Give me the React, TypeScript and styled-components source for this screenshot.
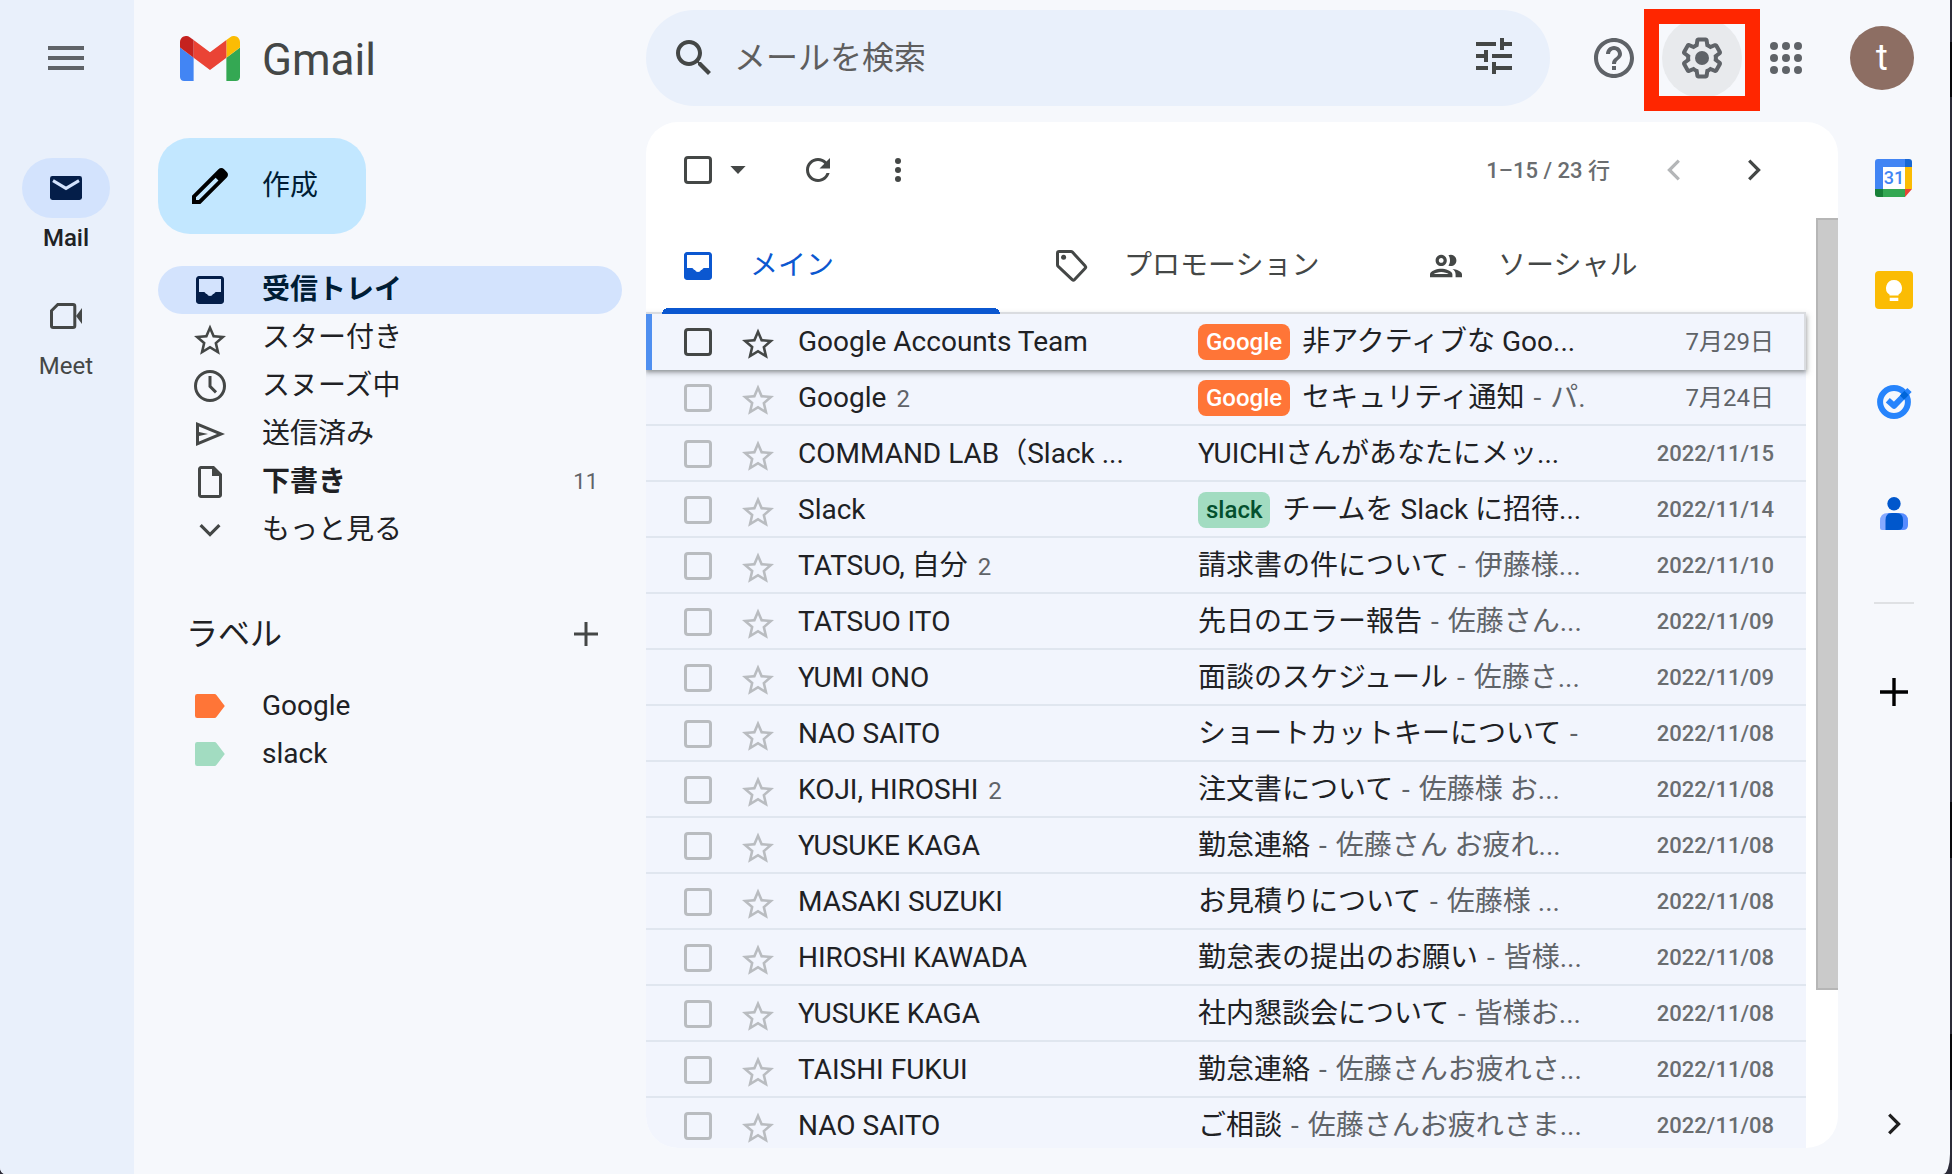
import React from "react";
import styled, { createGlobalStyle } from "styled-components";

const INK = "#202124";
const ICON = "#444746";
const MUTED = "#5f6368";
const BLUE = "#0b57d0";

const GlobalStyle = createGlobalStyle`
  *, *::before, *::after { box-sizing: border-box; }
  html, body { margin: 0; background: #2b2b38; }
  body, button, input, table {
    font-family: Roboto, "Noto Sans CJK JP", sans-serif;
    font-size: 28px;
    color: ${INK};
  }
  button { border: 0; padding: 0; background: none; cursor: pointer; text-align: left; }
  a { color: inherit; text-decoration: none; }
  svg { display: block; flex: none; }
`;

/* ---------- frame ---------- */

const Desktop = styled.div`
  height: 100vh;
  padding-right: 2px;
  background: linear-gradient(
    #2b2b38 42px, #08080c 42px 97px, #2b2b38 97px 802px, #08080c 802px 858px,
    #2b2b38 858px 1034px, #08080c 1034px 1090px, #2b2b38 1090px
  );
`;

const Window = styled.div`
  display: flex;
  height: 100%;
  overflow: hidden;
  background: #f6f8fc;
  border-radius: 0 0 7px 5px / 0 0 20px 7px;
`;

const Rail = styled.nav`
  display: flex;
  flex-direction: column;
  align-items: center;
  flex: none;
  width: 134px;
  padding: 34px 2px 0 0;
  background: #e9f0fb;
`;

const RailItem = styled.a<{ $active?: boolean }>`
  display: flex;
  flex-direction: column;
  align-items: center;
  gap: 6px;
  font-size: 24px;
  line-height: 28px;
  font-weight: ${(p) => (p.$active ? 500 : 400)};
  color: ${(p) => (p.$active ? INK : ICON)};
`;

const RailPill = styled.span<{ $active?: boolean }>`
  display: flex;
  align-items: center;
  justify-content: center;
  width: 88px;
  height: 60px;
  border-radius: 30px;
  background: ${(p) => (p.$active ? "#d3e3fd" : "transparent")};
  color: ${(p) => (p.$active ? "#041e49" : ICON)};
`;

const RailList = styled.div`
  display: flex;
  flex-direction: column;
  gap: 34px;
  margin-top: 76px;
`;

const Page = styled.div`
  display: flex;
  flex-direction: column;
  flex: 1;
  min-width: 0;
`;

const Header = styled.header`
  display: flex;
  align-items: center;
  flex: none;
  height: 122px;
  padding-bottom: 6px;
`;

const Brand = styled.a`
  display: flex;
  align-items: center;
  gap: 22px;
  flex: none;
  width: 512px;
  padding-left: 46px;
`;

const BrandName = styled.span`
  padding-top: 4px;
  font-size: 44px;
  line-height: 52px;
  color: ${ICON};
`;

const Search = styled.form`
  display: flex;
  align-items: center;
  flex: 1;
  min-width: 0;
  height: 96px;
  padding: 0 32px 0 24px;
  border-radius: 48px;
  background: #e9f0fb;
  color: ${ICON};
`;

const SearchInput = styled.input`
  flex: 1;
  min-width: 0;
  height: 48px;
  margin: 0 16px;
  padding: 0;
  border: 0;
  outline: 0;
  background: none;
  font-size: 32px;
  &::placeholder { color: #5e5e5e; opacity: 1; }
`;

const Actions = styled.div`
  display: flex;
  align-items: center;
  flex: none;
  padding: 0 36px 0 24px;
  color: ${MUTED};
`;

const RoundButton = styled.button<{ $shaded?: boolean }>`
  display: flex;
  align-items: center;
  justify-content: center;
  width: 80px;
  height: 80px;
  border-radius: 50%;
  color: inherit;
  background: ${(p) => (p.$shaded ? "#e8eaed" : "none")};
`;

const Highlighted = styled.div`
  position: relative;
  margin: 0 4px 0 8px;
`;

const HighlightFrame = styled.span`
  position: absolute;
  inset: -9px -18px -13px -18px;
  border: 15px solid #ff2600;
  pointer-events: none;
`;

const Avatar = styled.button`
  width: 64px;
  height: 64px;
  margin-left: 24px;
  border-radius: 50%;
  background: #8d6e63;
  color: #fff;
  font-size: 36px;
  line-height: 64px;
  text-align: center;
`;

const Body = styled.div`
  display: flex;
  flex: 1;
  min-height: 0;
  padding-bottom: 26px;
`;

/* ---------- sidebar ---------- */

const Sidebar = styled.aside`
  flex: none;
  width: 512px;
  padding: 16px 24px 0;
`;

const Compose = styled.button`
  display: flex;
  align-items: center;
  gap: 28px;
  height: 96px;
  margin-bottom: 32px;
  padding: 0 48px 0 28px;
  border-radius: 32px;
  background: #c2e7ff;
  color: #001d35;
`;

const RaisedLabel = styled.span`
  padding-bottom: 6px;
`;

const NavLink = styled.a<{ $active?: boolean; $bold?: boolean }>`
  display: flex;
  align-items: center;
  gap: 32px;
  height: 48px;
  padding: 0 24px 0 32px;
  border-radius: 24px;
  line-height: 40px;
  color: ${(p) => (p.$active ? "#001d35" : INK)};
  background: ${(p) => (p.$active ? "#d3e3fd" : "none")};
  font-weight: ${(p) => (p.$active || p.$bold ? 700 : 400)};
  svg { color: ${(p) => (p.$active ? "#041e49" : ICON)}; }
`;

const NavCount = styled.span`
  margin-left: auto;
  font-size: 22px;
  font-weight: 400;
  color: ${MUTED};
`;

const LabelHeader = styled.div`
  display: flex;
  align-items: center;
  justify-content: space-between;
  height: 80px;
  margin: 40px 0 8px;
  padding: 0 16px 0 28px;
`;

const LabelTitle = styled.h2`
  margin: 0;
  font-size: 32px;
  line-height: 40px;
  font-weight: 400;
`;

const IconButton = styled.button`
  display: flex;
  align-items: center;
  justify-content: center;
  flex: none;
  width: 40px;
  height: 40px;
  color: ${ICON};
  &:disabled { color: #b4b6b8; }
`;

const MenuButton = styled(IconButton)`
  width: 48px;
  height: 48px;
  color: ${MUTED};
`;

/* ---------- mail panel ---------- */

const Panel = styled.main`
  display: flex;
  flex-direction: column;
  flex: 1;
  min-width: 0;
  overflow: hidden;
  border-radius: 32px;
  background: #fff;
`;

const Toolbar = styled.div`
  display: flex;
  align-items: center;
  flex: none;
  height: 96px;
  padding: 0 64px 0 38px;
`;

const SelectMenuButton = styled(IconButton)`
  margin-left: 6px;
`;

const ToolGroup = styled.div`
  display: flex;
  align-items: center;
  gap: 40px;
  margin-left: 40px;
`;

const Pager = styled.div`
  display: flex;
  align-items: center;
  gap: 40px;
  margin-left: auto;
`;

const PagerText = styled.span`
  margin-right: 4px;
  padding-bottom: 4px;
  font-size: 22px;
  font-weight: 500;
  color: #6a6d70;
`;

const Checkbox = styled.input<{ $strong?: boolean }>`
  appearance: none;
  display: block;
  flex: none;
  width: 28px;
  height: 28px;
  margin: 0;
  border: 3px solid ${(p) => (p.$strong ? ICON : "#b9bcc0")};
  border-radius: 4px;
`;

const ScrollArea = styled.div`
  display: flex;
  flex: 1;
  min-height: 0;
`;

const ScrollBody = styled.div`
  flex: 1;
  min-width: 0;
  margin-right: 10px;
`;

const ScrollThumb = styled.div`
  flex: none;
  width: 22px;
  height: 83%;
  border: 2px solid #b6b6b6;
  border-right: 0;
  background: #cacaca;
`;

const Tabs = styled.div`
  position: relative;
  z-index: 1;
  display: flex;
  height: 96px;
`;

const Tab = styled.button<{ $active?: boolean }>`
  width: 374px;
  padding-left: 16px;
  color: ${(p) => (p.$active ? BLUE : ICON)};
`;

const TabInner = styled.span<{ $active?: boolean }>`
  display: flex;
  align-items: center;
  gap: 32px;
  width: 338px;
  height: 96px;
  padding-left: 16px;
  background: ${(p) =>
    p.$active
      ? `radial-gradient(circle at 6px 6px, ${BLUE} 6px, transparent 6px) left bottom / 6px 6px no-repeat,
         radial-gradient(circle at 0 6px, ${BLUE} 6px, transparent 6px) right bottom / 6px 6px no-repeat,
         linear-gradient(${BLUE}, ${BLUE}) center bottom / calc(100% - 12px) 6px no-repeat`
      : "none"};
`;

const MailTable = styled.table`
  width: 100%;
  table-layout: fixed;
  border-spacing: 0;
`;

const Col = styled.col<{ $width?: number }>`
  width: ${(p) => (p.$width ? `${p.$width}px` : "auto")};
`;

const Row = styled.tr<{ $hover?: boolean }>`
  height: 56px;
  background: #f2f5fd;
  ${(p) =>
    p.$hover
      ? `position: relative;
         box-shadow: inset -2px 0 0 #dadce0, 0 -2px 0 #dadce0,
           0 2px 4px rgba(60, 64, 67, 0.45), 0 2px 6px 2px rgba(60, 64, 67, 0.15);
         td:first-child { box-shadow: inset 6px 0 0 #4f8ff0; }`
      : `td { box-shadow: inset 0 -2px 0 #e0e6ef; }`}
`;

const Cell = styled.td`
  height: 56px;
  padding: 0;
  overflow: hidden;
  white-space: nowrap;
  vertical-align: middle;
  line-height: 40px;
`;

const CheckCell = styled(Cell)`
  padding-left: 38px;
`;

const SenderCell = styled(Cell)`
  padding-left: 16px;
`;

const DateCell = styled(Cell)<{ $full: boolean }>`
  padding-right: 32px;
  text-align: right;
  font-size: ${(p) => (p.$full ? 22 : 24)}px;
  font-weight: ${(p) => (p.$full ? 500 : 400)};
  color: ${(p) => (p.$full ? "#6a6d70" : MUTED)};
`;

const StarButton = styled(IconButton)<{ $strong?: boolean }>`
  margin-left: 4px;
  color: ${(p) => (p.$strong ? ICON : "#b9bcc0")};
`;

const Count = styled.span`
  margin-left: 10px;
  font-size: 24px;
  color: ${MUTED};
`;

const SubjectLine = styled.div`
  display: flex;
  align-items: center;
  overflow: hidden;
`;

const Snippet = styled.span`
  color: ${MUTED};
  white-space: pre;
`;

const Dash = styled.span`
  margin: 0 2px;
`;

const Chip = styled.span<{ $bg: string; $fg: string }>`
  flex: none;
  height: 36px;
  margin-right: 12px;
  padding: 0 8px;
  border-radius: 8px;
  font-size: 24px;
  font-weight: 500;
  line-height: 36px;
  background: ${(p) => p.$bg};
  color: ${(p) => p.$fg};
`;

/* ---------- side panel ---------- */

const SidePanel = styled.aside`
  display: flex;
  flex-direction: column;
  align-items: center;
  flex: none;
  width: 112px;
`;

const AppButton = styled.button`
  display: flex;
  align-items: center;
  justify-content: center;
  width: 112px;
  height: 112px;
  color: #000;
`;

const Divider = styled.hr`
  width: 40px;
  height: 2px;
  margin: 32px 0;
  border: 0;
  background: #dfe1e4;
`;

const Collapse = styled(IconButton)`
  height: 48px;
  margin-top: auto;
  color: #1f1f1f;
`;

/* ---------- icons ---------- */

type IconProps = { size?: number; box?: string; children: React.ReactNode };

const Icon = ({ size = 40, box = "0 0 20 20", children }: IconProps) => (
  <svg width={size} height={size} viewBox={box} fill="currentColor" aria-hidden="true">
    {children}
  </svg>
);

const InboxIcon = () => (
  <Icon>
    <path
      fillRule="evenodd"
      d="M4.5 17q-.62 0-1.06-.44Q3 16.13 3 15.5v-11q0-.62.44-1.06Q3.88 3 4.5 3h11q.62 0 1.06.44.44.44.44 1.06v11q0 .62-.44 1.06-.44.44-1.06.44zM4.5 4.5V11H7q.4 0 .6.4.3.6.9.6.3 1 1.5 1t1.5-1q.6 0 .9-.6.2-.4.6-.4h2.5V4.5z"
    />
  </Icon>
);

const StarIcon = () => (
  <Icon box="-0.5 -2 25 25">
    <path d="M22 9.24l-7.19-.62L12 2 9.19 8.63 2 9.24l5.46 4.73L5.82 21 12 17.27 18.18 21l-1.63-7.03L22 9.24zM12 15.4l-3.76 2.27 1-4.28-3.32-2.88 4.38-.38L12 6.1l1.71 4.04 4.38.38-3.32 2.88 1 4.28L12 15.4z" />
  </Icon>
);

const ClockIcon = () => (
  <Icon>
    <g fill="none" stroke="currentColor" strokeWidth="1.5">
      <circle cx="10" cy="10" r="7.25" />
      <path d="M10 5v5.2l3 3" />
    </g>
  </Icon>
);

const SendIcon = () => (
  <Icon>
    <path fillRule="evenodd" d="M3 16V4l14.5 6zM4.5 13.75 13.5 10 4.5 6.25V9L9 10l-4.5 1z" />
  </Icon>
);

const DraftIcon = () => (
  <Icon>
    <path
      fillRule="evenodd"
      d="M5.5 18q-.62 0-1.06-.44Q4 17.13 4 16.5v-13q0-.62.44-1.06Q4.88 2 5.5 2H12l4 4v10.5q0 .62-.44 1.06-.44.44-1.06.44zM11 7V3.5H5.5v13h9V7z"
    />
  </Icon>
);

const ChevronIcon = ({ turn = 0 }: { turn?: number }) => (
  <Icon>
    <path
      d="M5.3 7.6 10 12.3l4.7-4.7"
      fill="none"
      stroke="currentColor"
      strokeWidth="1.6"
      transform={`rotate(${turn} 10 10)`}
    />
  </Icon>
);

const PlusIcon = ({ reach = 6, weight = 1.5 }: { reach?: number; weight?: number }) => (
  <Icon>
    <path
      d={`M10 ${10 - reach}V${10 + reach}M${10 - reach} 10H${10 + reach}`}
      stroke="currentColor"
      strokeWidth={weight}
    />
  </Icon>
);

const LabelIcon = ({ color }: { color: string }) => (
  <Icon>
    <path fill={color} d="M3.6 4h8.6q.7 0 1.1.6L17.4 10l-4.1 5.4q-.4.6-1.1.6H3.6q-1.1 0-1.1-1.1V5.1Q2.5 4 3.6 4z" />
  </Icon>
);

const TagIcon = () => (
  <Icon>
    <path
      d="M3.6 2.75h5.9q.4 0 .7.3l6.4 7q.5.6 0 1.1l-5.4 5.7q-.5.5-1.1 0L3.1 10.2q-.35-.3-.35-.7V3.6q0-.85.85-.85z"
      fill="none"
      stroke="currentColor"
      strokeWidth="1.5"
    />
    <circle cx="5.8" cy="5.6" r="1.25" />
  </Icon>
);

const PeopleIcon = () => (
  <Icon box="-0.5 -0.5 25 25">
    <path d="M9 13.75c-2.34 0-7 1.17-7 3.5V19h14v-1.75c0-2.33-4.66-3.5-7-3.5zM4.34 17c.84-.58 2.87-1.25 4.66-1.25s3.82.67 4.66 1.25H4.34zM9 12c1.93 0 3.5-1.57 3.5-3.5S10.93 5 9 5 5.5 6.57 5.5 8.5 7.07 12 9 12zm0-5c.83 0 1.5.67 1.5 1.5S9.83 10 9 10s-1.5-.67-1.5-1.5S8.17 7 9 7zm7.04 6.81c1.16.84 1.96 1.96 1.96 3.44V19h4v-1.75c0-2.02-3.5-3.17-5.96-3.44zM15 12c1.93 0 3.5-1.57 3.5-3.5S16.93 5 15 5c-.54 0-1.04.13-1.5.35.63.89 1 1.98 1 3.15s-.37 2.26-1 3.15c.46.22.96.35 1.5.35z" />
  </Icon>
);

const MenuIcon = () => (
  <Icon size={48} box="0 0 24 24">
    <path d="M3 6h18v2H3zM3 11h18v2H3zM3 16h18v2H3z" />
  </Icon>
);

const MailIcon = () => (
  <Icon>
    <rect x="2" y="4" width="16" height="12" rx="1.2" />
    <path d="M3.5 6.3 10 10.2l6.5-3.9" fill="none" stroke="#d3e3fd" strokeWidth="1.5" />
  </Icon>
);

const MeetIcon = () => (
  <Icon>
    <path
      d="M2.75 7.4 5.9 4.25h7.6q.9 0 .9.9v9.7q0 .9-.9.9H3.6q-.85 0-.85-.9z"
      fill="none"
      stroke="currentColor"
      strokeWidth="1.5"
    />
    <path d="M15 10l3-4v8z" />
  </Icon>
);

const PencilIcon = () => (
  <Icon size={48} box="0 0 24 24">
    <path
      fill="#000"
      d="M20.41 4.94l-1.35-1.35c-.78-.78-2.05-.78-2.83 0L3 16.82V21h4.18L20.41 7.77c.79-.78.79-2.05 0-2.83zM6.41 19.06L5 19v-1.36l9.82-9.82 1.41 1.41-9.82 9.83z"
    />
  </Icon>
);

const SearchIcon = () => (
  <Icon size={48} box="0 0 24 24">
    <path d="M15.5 14h-.79l-.28-.27C15.41 12.59 16 11.11 16 9.5 16 5.91 13.09 3 9.5 3S3 5.91 3 9.5 5.91 16 9.5 16c1.61 0 3.09-.59 4.23-1.57l.27.28v.79l5 4.99L20.49 19l-4.99-5zm-6 0C7.01 14 5 11.99 5 9.5S7.01 5 9.5 5 14 7.01 14 9.5 11.99 14 9.5 14z" />
  </Icon>
);

const TuneIcon = () => (
  <Icon size={48} box="0 1 24 24">
    <path d="M3 17v2h6v-2H3zM3 5v2h10V5H3zm10 16v-2h8v-2h-8v-2h-2v6h2zM7 9v2H3v2h4v2h2V9H7zm14 4v-2H11v2h10zm-6-4h2V7h4V5h-4V3h-2v6z" />
  </Icon>
);

const HelpIcon = () => (
  <Icon size={48} box="0 0 24 24">
    <path d="M11 18h2v-2h-2v2zm1-16C6.48 2 2 6.48 2 12s4.48 10 10 10 10-4.48 10-10S17.52 2 12 2zm0 18c-4.41 0-8-3.59-8-8s3.59-8 8-8 8 3.59 8 8-3.59 8-8 8zm0-14c-2.21 0-4 1.79-4 4h2c0-1.1.9-2 2-2s2 .9 2 2c0 2-3 1.75-3 5h2c0-2.25 3-2.5 3-5 0-2.21-1.79-4-4-4z" />
  </Icon>
);

const GearIcon = () => (
  <Icon size={48} box="0 0 24 24">
    <path d="M13.85 22.25h-3.7c-.74 0-1.36-.54-1.45-1.27l-.27-1.89c-.27-.14-.53-.29-.79-.46l-1.8.72c-.7.26-1.47-.03-1.81-.65L2.2 15.53c-.35-.66-.2-1.44.36-1.88l1.53-1.19c-.01-.15-.02-.3-.02-.46 0-.15.01-.31.02-.46l-1.52-1.19c-.59-.45-.74-1.26-.37-1.88l1.85-3.19c.34-.62 1.11-.9 1.79-.63l1.81.73c.26-.17.52-.32.78-.46l.27-1.91c.09-.7.71-1.25 1.44-1.25h3.7c.74 0 1.36.54 1.45 1.27l.27 1.89c.27.14.53.29.79.46l1.8-.72c.71-.26 1.48.03 1.82.65l1.84 3.18c.36.66.2 1.44-.36 1.88l-1.52 1.19c.01.15.02.3.02.46s-.01.31-.02.46l1.52 1.19c.56.45.72 1.23.37 1.86l-1.86 3.22c-.34.62-1.11.9-1.8.63l-1.8-.72c-.26.17-.52.32-.78.46l-.27 1.91c-.1.68-.72 1.22-1.46 1.22zm-3.23-2h2.76l.37-2.55.53-.22c.44-.18.88-.44 1.34-.78l.45-.34 2.38.96 1.38-2.4-2.03-1.58.07-.56c.03-.26.06-.51.06-.78s-.03-.53-.06-.78l-.07-.56 2.03-1.58-1.39-2.4-2.39.96-.45-.35c-.42-.32-.87-.58-1.33-.77l-.52-.22-.37-2.55h-2.76l-.37 2.55-.53.21c-.44.19-.88.44-1.34.79l-.45.33-2.38-.95-1.39 2.39 2.03 1.58-.07.56a7 7 0 0 0-.06.79c0 .26.02.53.06.78l.07.56-2.03 1.58 1.38 2.4 2.39-.96.45.35c.43.33.86.58 1.33.77l.53.22.38 2.55z" />
    <circle cx="12" cy="12" r="3.5" />
  </Icon>
);

const AppsIcon = () => (
  <Icon size={48} box="0 0 24 24">
    {[6, 12, 18].map((y) => [6, 12, 18].map((x) => <circle key={`${x}-${y}`} cx={x} cy={y} r="2" />))}
  </Icon>
);

const RefreshIcon = () => (
  <Icon size={36} box="0 0 24 24">
    <path d="M17.65 6.35C16.2 4.9 14.21 4 12 4c-4.42 0-7.99 3.58-7.99 8s3.57 8 7.99 8c3.73 0 6.84-2.55 7.73-6h-2.08c-.82 2.33-3.04 4-5.65 4-3.31 0-6-2.69-6-6s2.69-6 6-6c1.66 0 3.14.69 4.22 1.78L13 11h7V4l-2.35 2.35z" />
  </Icon>
);

const MoreIcon = () => (
  <Icon size={36} box="0 0 24 24">
    <circle cx="12" cy="6" r="2" />
    <circle cx="12" cy="12" r="2" />
    <circle cx="12" cy="18" r="2" />
  </Icon>
);

const CaretIcon = () => (
  <Icon>
    <path d="M6.2 8h7.6L10 12z" />
  </Icon>
);

const GmailLogo = () => (
  <svg width="60" height="45" viewBox="52 42 88 66" aria-hidden="true">
    <path fill="#4285f4" d="M58 108h14V74L52 59v43c0 3.32 2.69 6 6 6" />
    <path fill="#34a853" d="M120 108h14c3.32 0 6-2.69 6-6V59l-20 15" />
    <path fill="#fbbc04" d="M120 48v26l20-15v-8c0-7.42-8.47-11.65-14.4-7.2" />
    <path fill="#ea4335" d="M72 74V48l24 18 24-18v26L96 92" />
    <path fill="#c5221f" d="M52 51v8l20 15V48l-5.6-4.2c-5.94-4.45-14.4-.22-14.4 7.2" />
  </svg>
);

const CalendarIcon = () => (
  <svg width="38" height="38" viewBox="0 0 38 38" aria-hidden="true">
    <path fill="#4285f4" d="M3 0h27v8H8v22H0V3q0-3 3-3z" />
    <path fill="#1967d2" d="M30 0h4q3 0 3 3v5h-7z" />
    <path fill="#fbbc04" d="M30 8h7v22h-7z" />
    <path fill="#34a853" d="M8 30h22v8H8z" />
    <path fill="#188038" d="M0 30h8v8H3q-3 0-3-3z" />
    <path fill="#ea4335" d="M30 30h7l-7 8z" />
    <path fill="#fff" d="M8 8h22v22H8z" />
    <text x="19" y="25" fontSize="18" fontWeight="500" fill="#4285f4" textAnchor="middle">
      31
    </text>
  </svg>
);

const KeepIcon = () => (
  <svg width="38" height="38" viewBox="0 0 38 38" aria-hidden="true">
    <rect width="38" height="38" rx="4" fill="#fbbc04" />
    <path fill="#fff" d="M19 9a8 8 0 0 1 4.5 14.6v.9h-9v-.9A8 8 0 0 1 19 9zM14.7 26.8h8.6V30h-8.6z" />
  </svg>
);

const TasksIcon = () => (
  <svg width="40" height="40" viewBox="0 0 40 40" aria-hidden="true">
    <circle cx="20" cy="20" r="13.9" fill="none" stroke="#2684fc" strokeWidth="6" />
    <path d="M13.8 18.2 20 23.8 35.5 8" fill="none" stroke="#2684fc" strokeWidth="6" strokeLinejoin="round" />
    <path d="M28 15.6 32.6 10.9" stroke="#0066da" strokeWidth="6" />
  </svg>
);

const ContactsIcon = () => (
  <svg width="40" height="40" viewBox="0 0 40 40" aria-hidden="true">
    <circle cx="20" cy="9.7" r="6.7" fill="#0057cc" />
    <path fill="#86a9ff" d="M14 19h12v17H8q-2 0-2-2v-7q0-8 8-8z" />
    <path fill="#578cff" d="M14 19h12q8 0 8 8v4q0 5-5 5H14z" />
    <path fill="#0057cc" d="M18 19h4q7 0 7 7v5q0 5-5 5H11.5v-10q0-7 6.5-7z" />
  </svg>
);

/* ---------- data ---------- */

type Mail = {
  sender: string;
  count?: number;
  chip?: "Google" | "slack";
  subject: string;
  snippet?: string;
  date: string;
};

const chipColors = {
  Google: { $bg: "#ff7537", $fg: "#ffffff" },
  slack: { $bg: "#a2dcc1", $fg: "#04502e" },
};

const mails: Mail[] = [
  { sender: "Google Accounts Team", chip: "Google", subject: "非アクティブな Goo...", date: "7月29日" },
  { sender: "Google", count: 2, chip: "Google", subject: "セキュリティ通知", snippet: "パ.", date: "7月24日" },
  { sender: "COMMAND LAB（Slack ...", subject: "YUICHIさんがあなたにメッ...", date: "2022/11/15" },
  { sender: "Slack", chip: "slack", subject: "チームを Slack に招待...", date: "2022/11/14" },
  { sender: "TATSUO, 自分", count: 2, subject: "請求書の件について", snippet: "伊藤様...", date: "2022/11/10" },
  { sender: "TATSUO ITO", subject: "先日のエラー報告", snippet: "佐藤さん...", date: "2022/11/09" },
  { sender: "YUMI ONO", subject: "面談のスケジュール", snippet: "佐藤さ...", date: "2022/11/09" },
  { sender: "NAO SAITO", subject: "ショートカットキーについて", snippet: "", date: "2022/11/08" },
  { sender: "KOJI, HIROSHI", count: 2, subject: "注文書について", snippet: "佐藤様 お...", date: "2022/11/08" },
  { sender: "YUSUKE KAGA", subject: "勤怠連絡", snippet: "佐藤さん お疲れ...", date: "2022/11/08" },
  { sender: "MASAKI SUZUKI", subject: "お見積りについて", snippet: "佐藤様 ...", date: "2022/11/08" },
  { sender: "HIROSHI KAWADA", subject: "勤怠表の提出のお願い", snippet: "皆様...", date: "2022/11/08" },
  { sender: "YUSUKE KAGA", subject: "社内懇談会について", snippet: "皆様お...", date: "2022/11/08" },
  { sender: "TAISHI FUKUI", subject: "勤怠連絡", snippet: "佐藤さんお疲れさ...", date: "2022/11/08" },
  { sender: "NAO SAITO", subject: "ご相談", snippet: "佐藤さんお疲れさま...", date: "2022/11/08" },
];

const folders = [
  { name: "受信トレイ", icon: <InboxIcon />, active: true },
  { name: "スター付き", icon: <StarIcon /> },
  { name: "スヌーズ中", icon: <ClockIcon /> },
  { name: "送信済み", icon: <SendIcon /> },
  { name: "下書き", icon: <DraftIcon />, bold: true, count: 11 },
  { name: "もっと見る", icon: <ChevronIcon /> },
];

const tabs = [
  { name: "メイン", icon: <InboxIcon />, active: true },
  { name: "プロモーション", icon: <TagIcon /> },
  { name: "ソーシャル", icon: <PeopleIcon /> },
];

const MailRow = ({ mail, hover }: { mail: Mail; hover: boolean }) => (
  <Row $hover={hover}>
    <CheckCell>
      <Checkbox type="checkbox" $strong={hover} aria-label={`${mail.sender} を選択`} />
    </CheckCell>
    <Cell>
      <StarButton $strong={hover} aria-label="スター">
        <StarIcon />
      </StarButton>
    </Cell>
    <SenderCell>
      {mail.sender}
      {mail.count && <Count>{mail.count}</Count>}
    </SenderCell>
    <Cell>
      <SubjectLine>
        {mail.chip && <Chip {...chipColors[mail.chip]}>{mail.chip}</Chip>}
        <span>{mail.subject}</span>
        {mail.snippet !== undefined && (
          <Snippet>
            <Dash>{" - "}</Dash>
            {mail.snippet}
          </Snippet>
        )}
      </SubjectLine>
    </Cell>
    <DateCell $full={mail.date.includes("/")}>{mail.date}</DateCell>
  </Row>
);

export default function App() {
  return (
    <Desktop>
      <GlobalStyle />
      <Window>
        <Rail>
          <MenuButton aria-label="メインメニュー">
            <MenuIcon />
          </MenuButton>
          <RailList>
            <RailItem href="#mail" $active>
              <RailPill $active>
                <MailIcon />
              </RailPill>
              Mail
            </RailItem>
            <RailItem href="#meet">
              <RailPill>
                <MeetIcon />
              </RailPill>
              Meet
            </RailItem>
          </RailList>
        </Rail>
        <Page>
          <Header>
            <Brand href="#inbox">
              <GmailLogo />
              <BrandName>Gmail</BrandName>
            </Brand>
            <Search role="search">
              <SearchIcon />
              <SearchInput type="text" placeholder="メールを検索" aria-label="メールを検索" />
              <TuneIcon />
            </Search>
            <Actions>
              <RoundButton aria-label="サポート">
                <HelpIcon />
              </RoundButton>
              <Highlighted>
                <RoundButton $shaded aria-label="設定">
                  <GearIcon />
                </RoundButton>
                <HighlightFrame />
              </Highlighted>
              <RoundButton aria-label="アプリ">
                <AppsIcon />
              </RoundButton>
              <Avatar>t</Avatar>
            </Actions>
          </Header>
          <Body>
            <Sidebar>
              <Compose>
                <PencilIcon />
                <RaisedLabel>作成</RaisedLabel>
              </Compose>
              <nav>
                {folders.map((f) => (
                  <NavLink key={f.name} href="#folder" $active={f.active} $bold={f.bold}>
                    {f.icon}
                    {f.name}
                    {f.count && <NavCount>{f.count}</NavCount>}
                  </NavLink>
                ))}
              </nav>
              <LabelHeader>
                <LabelTitle>ラベル</LabelTitle>
                <IconButton aria-label="ラベルを作成">
                  <PlusIcon />
                </IconButton>
              </LabelHeader>
              <nav>
                <NavLink href="#google">
                  <LabelIcon color="#ff7537" />
                  Google
                </NavLink>
                <NavLink href="#slack">
                  <LabelIcon color="#a2dcc1" />
                  slack
                </NavLink>
              </nav>
            </Sidebar>
            <Panel>
              <Toolbar>
                <Checkbox type="checkbox" $strong aria-label="すべて選択" />
                <SelectMenuButton aria-label="選択オプション">
                  <CaretIcon />
                </SelectMenuButton>
                <ToolGroup>
                  <IconButton aria-label="更新">
                    <RefreshIcon />
                  </IconButton>
                  <IconButton aria-label="その他">
                    <MoreIcon />
                  </IconButton>
                </ToolGroup>
                <Pager>
                  <PagerText>1–15 / 23 行</PagerText>
                  <IconButton disabled aria-label="前へ">
                    <ChevronIcon turn={90} />
                  </IconButton>
                  <IconButton aria-label="次へ">
                    <ChevronIcon turn={-90} />
                  </IconButton>
                </Pager>
              </Toolbar>
              <ScrollArea>
                <ScrollBody>
                  <Tabs role="tablist">
                    {tabs.map((t) => (
                      <Tab key={t.name} role="tab" aria-selected={!!t.active} $active={t.active}>
                        <TabInner $active={t.active}>
                          {t.icon}
                          <RaisedLabel>{t.name}</RaisedLabel>
                        </TabInner>
                      </Tab>
                    ))}
                  </Tabs>
                  <MailTable>
                    <colgroup>
                      <Col $width={88} />
                      <Col $width={48} />
                      <Col $width={416} />
                      <Col />
                      <Col $width={220} />
                    </colgroup>
                    <tbody>
                      {mails.map((mail, i) => (
                        <MailRow key={i} mail={mail} hover={i === 0} />
                      ))}
                    </tbody>
                  </MailTable>
                </ScrollBody>
                <ScrollThumb />
              </ScrollArea>
            </Panel>
            <SidePanel>
              <AppButton aria-label="カレンダー">
                <CalendarIcon />
              </AppButton>
              <AppButton aria-label="Keep">
                <KeepIcon />
              </AppButton>
              <AppButton aria-label="ToDo リスト">
                <TasksIcon />
              </AppButton>
              <AppButton aria-label="連絡先">
                <ContactsIcon />
              </AppButton>
              <Divider />
              <AppButton aria-label="アドオンを取得">
                <PlusIcon reach={7} weight={1.7} />
              </AppButton>
              <Collapse aria-label="サイドパネルを非表示">
                <ChevronIcon turn={-90} />
              </Collapse>
            </SidePanel>
          </Body>
        </Page>
      </Window>
    </Desktop>
  );
}
